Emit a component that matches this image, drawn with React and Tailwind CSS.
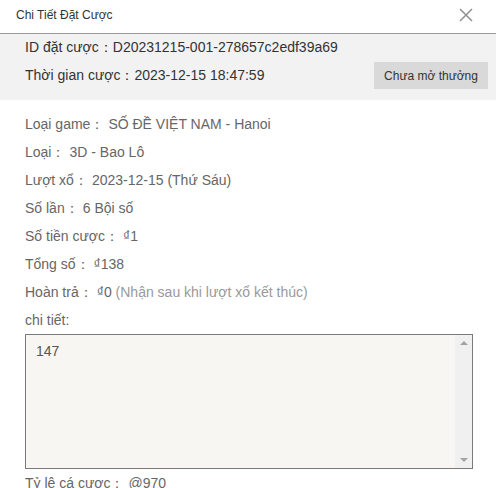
import React from 'react';

const Row = ({ label, children }) => (
  <div className="h-[28px] flex items-center whitespace-nowrap">
    <span>{label}：</span>
    <span className="ml-[4px]">{children}</span>
  </div>
);

export default function App() {
  return (
    <div className="w-[496px] h-[488px] overflow-hidden bg-white text-[#666]" style={{ fontFamily: '"Liberation Sans", Arial, sans-serif' }}>
      <div className="h-[34px] flex items-center justify-between pl-[16px] pr-[22px] border-b border-[#9a9a9a]">
        <span className="text-[12px] text-[#333] -mt-[3px]">Chi Tiết Đặt Cược</span>
        <svg width="16" height="16" viewBox="0 0 16 16" className="-mt-[3px]">
          <path d="M2 2L14 14M14 2L2 14" stroke="#909090" strokeWidth="1.5" />
        </svg>
      </div>
      <div className="bg-[#f2f2f2] pl-[25px] pr-[8px] pb-[11px] text-[14px] text-[#333]">
        <div className="h-[27px] flex items-center">ID đặt cược：D20231215-001-278657c2edf39a69</div>
        <div className="h-[28px] flex items-center justify-between">
          <span>Thời gian cược：2023-12-15 18:47:59</span>
          <button className="h-[27px] w-[114px] bg-[#d9d9d9] text-[12px] text-[#333] mt-[1px]">Chưa mở thưởng</button>
        </div>
      </div>
      <div className="pt-[10px] pl-[25px] pr-[23px] text-[14px]">
        <Row label="Loại game">SỐ ĐỀ VIỆT NAM - Hanoi</Row>
        <Row label="Loại">3D - Bao Lô</Row>
        <Row label="Lượt xổ">2023-12-15 (Thứ Sáu)</Row>
        <Row label="Số lần">6 Bội số</Row>
        <Row label="Số tiền cược">₫1</Row>
        <Row label="Tổng số">₫138</Row>
        <Row label="Hoàn trả">
          ₫0 <span className="text-[#999]">(Nhận sau khi lượt xổ kết thúc)</span>
        </Row>
        <div className="h-[28px] flex items-center">chi tiết:</div>
        <div className="h-[135px] border border-[#7a7a7a] bg-[#f7f6f2] flex">
          <div className="flex-1 pl-[10px] pt-[6px] text-[#555]">147</div>
          <div className="w-[17px] bg-[#f0f0f0] flex flex-col items-center justify-between py-[6px]">
            <div className="w-0 h-0 border-l-[4px] border-r-[4px] border-b-[4px] border-l-transparent border-r-transparent border-b-[#a3a3a3]" />
            <div className="w-0 h-0 border-l-[4px] border-r-[4px] border-t-[4px] border-l-transparent border-r-transparent border-t-[#a3a3a3]" />
          </div>
        </div>
        <Row label="Tỷ lệ cá cược">@970</Row>
      </div>
    </div>
  );
}
